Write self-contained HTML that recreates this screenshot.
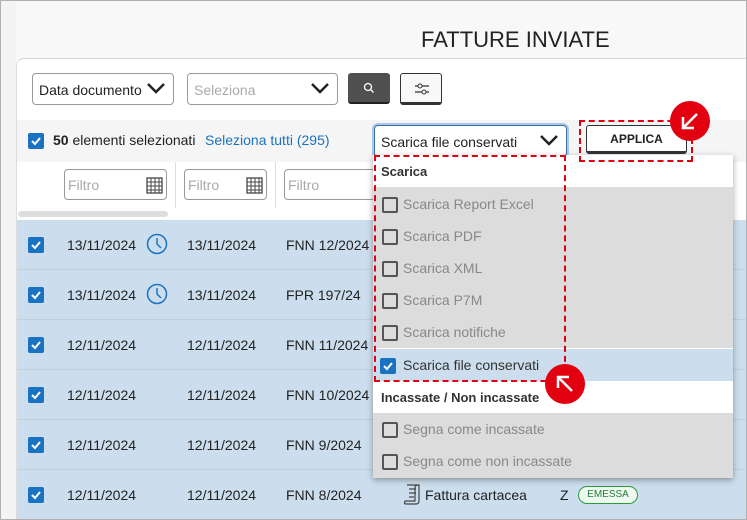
<!DOCTYPE html><html><head><meta charset="utf-8"><style>
*{box-sizing:border-box;margin:0;padding:0}
body{width:747px;height:520px;overflow:hidden;position:relative;background:#f8f8f8;font-family:"Liberation Sans",Arial,sans-serif;color:#222}
.a{position:absolute}
.frame{left:0;top:0;width:747px;height:520px;border:1px solid #b0b0b0;z-index:50;pointer-events:none}
.card{left:16px;top:58px;width:731px;height:462px;background:#fff;border-top:1px solid #d5d5d5;border-left:1px solid #ddd;border-top-left-radius:8px}
.sel{border:1px solid #999;border-radius:4px;height:32px;font-size:14px;padding:8px 6px;background:#fff}
.chev{position:absolute;right:8px;top:8px}
.cb{width:16px;height:16px;background:#1a73c1;border-radius:2px}
.cbe{width:16px;height:16px;border:2px solid #555;border-radius:2px;background:transparent}
.row{left:17px;width:730px;height:50px;background:#ccdeed;border-bottom:1px solid #bfd0df;font-size:14px}
.row span{position:absolute;top:17px}
.filt{border:1px solid #999;border-radius:4px;height:31px;background:#fff;color:#aaa;font-size:14px;padding:7px 3px}
.it{left:373px;width:360px;height:32px;background:#dcdcdc;font-size:14px;color:#888}
.it .cbe{position:absolute;left:9px;top:9px;width:16px;height:16px}
.it span{position:absolute;left:30px;top:8px}
.hd{left:373px;width:360px;height:32px;background:#fff;font-size:13px;font-weight:bold;padding:9px 8px;color:#333}
.dash{border:2.5px dashed #e00010}
.circ{width:40px;height:40px;border-radius:50%;background:#e20010}
</style></head><body>
<div class="a frame"></div>
<div class="a" style="left:0;top:0;width:16px;height:520px;background:#f4f4f4"></div>
<div class="a" style="left:421px;top:27px;font-size:22px;color:#222">FATTURE INVIATE</div>
<div class="a card"></div>
<div class="a sel" style="left:32px;top:73px;width:142px">Data documento<svg class="chev" width="18" height="12" viewBox="0 0 18 12"><path d="M1 2l8 8 8-8" stroke="#222" stroke-width="2.5" fill="none"/></svg></div>
<div class="a sel" style="left:187px;top:73px;width:151px;color:#aaa">Seleziona<svg class="chev" width="18" height="12" viewBox="0 0 18 12"><path d="M1 2l8 8 8-8" stroke="#222" stroke-width="2.5" fill="none"/></svg></div>
<div class="a" style="left:348px;top:73px;width:42px;height:31px;background:#505050;border-radius:3px;border-bottom:2px solid #222"><svg class="a" style="left:15px;top:9px" width="12" height="12" viewBox="0 0 12 12"><circle cx="5" cy="5" r="3.5" stroke="#fff" stroke-width="1.3" fill="none"/><path d="M7.5 7.5l3 3" stroke="#fff" stroke-width="1.3"/></svg></div>
<div class="a" style="left:400px;top:73px;width:42px;height:32px;background:#f8f8f8;border:1px solid #333;border-bottom-width:3px;border-radius:3px"><svg class="a" style="left:13px;top:8px" width="16" height="14" viewBox="0 0 16 14"><path d="M1 4h14M1 10h14" stroke="#333" stroke-width="1.2"/><rect x="4" y="2" width="4" height="4" rx="2" fill="#f8f8f8" stroke="#333"/><rect x="8" y="8" width="4" height="4" rx="2" fill="#f8f8f8" stroke="#333"/></svg></div>
<div class="a" style="left:17px;top:120px;width:730px;height:42px;background:#f5f5f5"></div>
<div class="a cb" style="left:28px;top:133px"><svg width="16" height="16"><path d="M4 8l3 3 5-6" stroke="#fff" stroke-width="2" fill="none"/></svg></div>
<div class="a" style="left:53px;top:132px;font-size:14px"><b>50</b> elementi selezionati</div>
<div class="a" style="left:205px;top:132px;font-size:14px;color:#1a73c1">Seleziona tutti (295)</div>
<div class="a sel" style="left:374px;top:125px;width:193px;height:32px;border-color:#3b6fa5;box-shadow:0 0 0 2px #a8c8e8">Scarica file conservati<svg class="chev" width="18" height="12" viewBox="0 0 18 12"><path d="M1 2l8 8 8-8" stroke="#222" stroke-width="2.5" fill="none"/></svg></div>
<div class="a" style="left:586px;top:125px;width:101px;height:29px;border:1px solid #333;border-bottom-width:3px;border-radius:3px;font-size:12px;font-weight:bold;text-align:center;padding-top:6px;background:#fff">APPLICA</div>
<div class="a filt" style="left:64px;top:169px;width:103px">Filtro<svg class="a" style="right:3px;top:6px" width="17" height="18" viewBox="0 0 17 18"><rect x="1" y="2" width="15" height="15" fill="none" stroke="#444" stroke-width="1.3"/><path d="M1 6h15M1 10h15M1 14h15M5 2v15M9 2v15M13 2v15" stroke="#444"/></svg></div>
<div class="a" style="left:175px;top:162px;width:1px;height:46px;background:#ddd"></div>
<div class="a filt" style="left:184px;top:169px;width:83px">Filtro<svg class="a" style="right:3px;top:6px" width="17" height="18" viewBox="0 0 17 18"><rect x="1" y="2" width="15" height="15" fill="none" stroke="#444" stroke-width="1.3"/><path d="M1 6h15M1 10h15M1 14h15M5 2v15M9 2v15M13 2v15" stroke="#444"/></svg></div>
<div class="a" style="left:275px;top:162px;width:1px;height:46px;background:#ddd"></div>
<div class="a filt" style="left:284px;top:169px;width:100px">Filtro</div>
<div class="a" style="left:18px;top:211px;width:150px;height:6px;background:#ddd;border-radius:3px"></div>
<div class="a row" style="top:220px"><div class="a cb" style="left:11px;top:17px"><svg width="16" height="16"><path d="M4 8l3 3 5-6" stroke="#fff" stroke-width="2" fill="none"/></svg></div><span style="left:50px">13/11/2024</span><svg class="a" style="left:129px;top:13px" width="22" height="22"><circle cx="11" cy="11" r="9.5" stroke="#1a73c1" stroke-width="1.5" fill="none"/><path d="M11 5v6l4 4" stroke="#1a73c1" stroke-width="1.5" fill="none"/></svg><span style="left:170px">13/11/2024</span><span style="left:269px">FNN 12/2024</span></div>
<div class="a row" style="top:270px"><div class="a cb" style="left:11px;top:17px"><svg width="16" height="16"><path d="M4 8l3 3 5-6" stroke="#fff" stroke-width="2" fill="none"/></svg></div><span style="left:50px">13/11/2024</span><svg class="a" style="left:129px;top:13px" width="22" height="22"><circle cx="11" cy="11" r="9.5" stroke="#1a73c1" stroke-width="1.5" fill="none"/><path d="M11 5v6l4 4" stroke="#1a73c1" stroke-width="1.5" fill="none"/></svg><span style="left:170px">13/11/2024</span><span style="left:269px">FPR 197/24</span></div>
<div class="a row" style="top:320px"><div class="a cb" style="left:11px;top:17px"><svg width="16" height="16"><path d="M4 8l3 3 5-6" stroke="#fff" stroke-width="2" fill="none"/></svg></div><span style="left:50px">12/11/2024</span><span style="left:170px">12/11/2024</span><span style="left:269px">FNN 11/2024</span></div>
<div class="a row" style="top:370px"><div class="a cb" style="left:11px;top:17px"><svg width="16" height="16"><path d="M4 8l3 3 5-6" stroke="#fff" stroke-width="2" fill="none"/></svg></div><span style="left:50px">12/11/2024</span><span style="left:170px">12/11/2024</span><span style="left:269px">FNN 10/2024</span></div>
<div class="a row" style="top:420px"><div class="a cb" style="left:11px;top:17px"><svg width="16" height="16"><path d="M4 8l3 3 5-6" stroke="#fff" stroke-width="2" fill="none"/></svg></div><span style="left:50px">12/11/2024</span><span style="left:170px">12/11/2024</span><span style="left:269px">FNN 9/2024</span></div>
<div class="a row" style="top:470px;border:none"><div class="a cb" style="left:11px;top:17px"><svg width="16" height="16"><path d="M4 8l3 3 5-6" stroke="#fff" stroke-width="2" fill="none"/></svg></div><span style="left:50px">12/11/2024</span><span style="left:170px">12/11/2024</span><span style="left:269px">FNN 8/2024</span>
<svg class="a" style="left:386px;top:14px" width="18" height="22" viewBox="0 0 18 22"><path d="M4 1h12v16c0 2-1 3-3 3H3c-2 0-2-3 0-3h9V3c0-1 1-2 4-2M6 5h7M6 9h7M6 13h5" stroke="#444" stroke-width="1.2" fill="none"/></svg>
<span style="left:408px">Fattura cartacea</span><span style="left:543px">Z</span>
<div class="a" style="left:561px;top:16px;width:60px;height:18px;border:1.5px solid #2a9a3a;border-radius:9px;background:#eefaef;color:#2a7a3a;font-size:10px;text-align:center;padding-top:2px">EMESSA</div></div>
<div class="a" style="left:373px;top:155px;width:360px;height:323px;box-shadow:0 2px 6px rgba(0,0,0,.35);background:#dcdcdc"></div>
<div class="a hd" style="top:155px">Scarica</div>
<div class="a it" style="top:188px"><div class="cbe"></div><span>Scarica Report Excel</span></div>
<div class="a it" style="top:220px"><div class="cbe"></div><span>Scarica PDF</span></div>
<div class="a it" style="top:252px"><div class="cbe"></div><span>Scarica XML</span></div>
<div class="a it" style="top:284px"><div class="cbe"></div><span>Scarica P7M</span></div>
<div class="a it" style="top:316px"><div class="cbe"></div><span>Scarica notifiche</span></div>
<div class="a it" style="top:348px;height:33px;background:#ccdeed;border-top:1px solid #fff;color:#333"><div class="a cb" style="left:7px;top:9px"><svg width="16" height="16"><path d="M4 8l3 3 5-6" stroke="#fff" stroke-width="2" fill="none"/></svg></div><span>Scarica file conservati</span></div>
<div class="a hd" style="top:381px">Incassate / Non incassate</div>
<div class="a it" style="top:413px"><div class="cbe"></div><span>Segna come incassate</span></div>
<div class="a it" style="top:445px"><div class="cbe"></div><span>Segna come non incassate</span></div>
<div class="a dash" style="left:374px;top:155px;width:192px;height:227px"></div>
<div class="a dash" style="left:579px;top:120px;width:114px;height:42px"></div>
<div class="a circ" style="left:670px;top:101px"><svg width="40" height="40"><path d="M27 13L13 27M13 16v11h11" stroke="#fff" stroke-width="2.5" fill="none"/></svg></div>
<div class="a circ" style="left:545px;top:364px"><svg width="40" height="40"><path d="M27 27L13 13M13 24V13h11" stroke="#fff" stroke-width="2.5" fill="none"/></svg></div>
</body></html>
